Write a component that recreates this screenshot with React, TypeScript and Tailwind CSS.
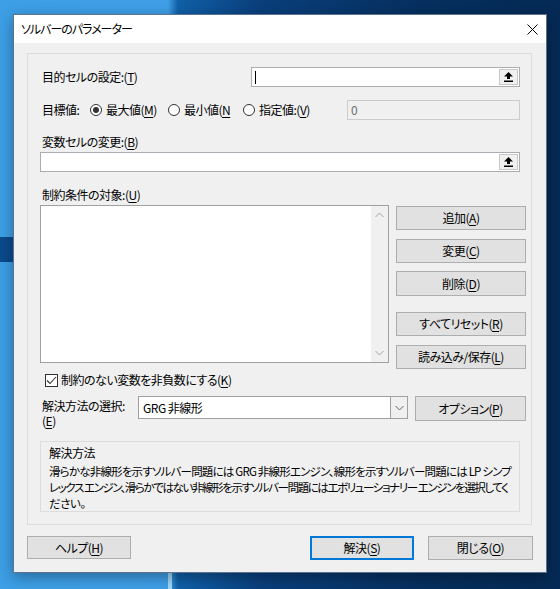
import type { ReactNode } from 'react';

const ui = "font-['Noto_Sans_CJK_JP','Noto_Sans',sans-serif] [font-feature-settings:'palt'] text-[12px] leading-[16px] tracking-[-0.5px] text-black";

function Key({ k }: { k: string }) {
  return <span className="underline underline-offset-[2px]">{k}</span>;
}

function WinButton({
  children,
  className = '',
  primary = false,
}: {
  children: ReactNode;
  className?: string;
  primary?: boolean;
}) {
  return (
    <div
      className={`flex shrink-0 items-center justify-center bg-[#e1e1e1] ${
        primary ? 'border-2 border-[#0078d7]' : 'border border-[#adadad]'
      } ${className}`}
    >
      {children}
    </div>
  );
}

function RefEdit({ className = '' }: { className?: string }) {
  return (
    <div className={`flex h-[20px] border border-[#abadb3] bg-white ${className}`}>
      <div className="flex-1" />
      <div className="w-[19px] m-[1px] bg-[#f0f0f0] border border-[#c8c8c8] flex items-center justify-center">
        <svg width="9" height="10" viewBox="0 0 9 10">
          <path d="M4.5 0 L9 4.5 L6 4.5 L6 7 L3 7 L3 4.5 L0 4.5 Z" fill="#000" />
          <rect x="0" y="8.5" width="9" height="1.5" fill="#000" />
        </svg>
      </div>
    </div>
  );
}

function Radio({ checked = false }: { checked?: boolean }) {
  return (
    <span className="w-[12px] h-[12px] rounded-full border border-[#333] bg-white flex items-center justify-center shrink-0">
      {checked && <span className="w-[6px] h-[6px] rounded-full bg-[#333]" />}
    </span>
  );
}

function Chevron({ down = false, color = '#a3a3a3' }: { down?: boolean; color?: string }) {
  return (
    <svg width="9" height="6" viewBox="0 0 9 6">
      <path
        d={down ? 'M0.5 1 L4.5 5 L8.5 1' : 'M0.5 5 L4.5 1 L8.5 5'}
        fill="none"
        stroke={color}
        strokeWidth="1"
      />
    </svg>
  );
}

export default function App() {
  return (
    <div className="relative w-[560px] h-[589px] overflow-hidden pt-[14px] pl-[13px] bg-[linear-gradient(90deg,#3d9fe6_0px,#3f9fe7_168px,#1060a8_178px,#0a3f7c_260px,#06305f_420px,#052a55_560px)]">
      {/* wallpaper streaks */}
      <div className="absolute left-0 top-[237px] w-[20px] h-[25px] bg-[#0b4a8c]" />
      <div className="absolute left-[168px] top-[570px] w-[4px] h-[19px] bg-[#9fd4f7]" />

      <div className={`relative w-[534px] h-[559px] flex flex-col border border-[#5b7390] bg-[#f0f0f0] shadow-[0_4px_14px_rgba(0,0,0,0.35)] ${ui}`}>
        {/* title bar */}
        <div className="h-[28px] bg-white flex items-center pl-[7px]">
          <span className="tracking-[-1px]">ソルバーのパラメーター</span>
          <div className="ml-auto mr-[8px] flex items-center">
            <svg width="11" height="11" viewBox="0 0 11 11">
              <path d="M0.5 0.5 L10.5 10.5 M10.5 0.5 L0.5 10.5" stroke="#000" strokeWidth="1" />
            </svg>
          </div>
        </div>

        <div className="flex-1 flex flex-col">
          {/* main group */}
          <div className="mt-[10px] ml-[13px] w-[505px] h-[472px] border border-[#dcdcdc] flex flex-col pl-[12px] pr-[11px]">
            <div className="mt-[13px] h-[20px] flex items-center">
              <span className="pl-[2px]">
                目的セルの設定:(<Key k="T" />)
              </span>
              <div className="ml-auto relative w-[269px]">
                <RefEdit />
                <span className="absolute left-[4px] top-[4px] w-[1px] h-[13px] bg-black" />
              </div>
            </div>

            <div className="mt-[13px] h-[20px] flex items-center">
              <span className="pl-[2px] w-[50px]">目標値:</span>
              <span className="w-[78px] flex items-center gap-[4px]">
                <Radio checked />
                <span>
                  最大値(<Key k="M" />)
                </span>
              </span>
              <span className="w-[75px] flex items-center gap-[4px]">
                <Radio />
                <span>
                  最小値(<Key k="N" />
                </span>
              </span>
              <span className="flex items-center gap-[4px]">
                <Radio />
                <span>
                  指定値:(<Key k="V" />)
                </span>
              </span>
              <div className="ml-auto w-[173px] h-[20px] border border-[#cccccc] bg-[#f0f0f0] pl-[3px] flex items-center text-[#6d6d6d]">
                0
              </div>
            </div>

            <div className="mt-[14px] h-[16px] pl-[2px]">
              変数セルの変更:(<Key k="B" />)
            </div>
            <RefEdit className="mt-[2px] w-[480px]" />

            <div className="mt-[15px] h-[16px] pl-[2px]">
              制約条件の対象:(<Key k="U" />)
            </div>
            <div className="mt-[2px] flex items-start">
              <div className="w-[349px] h-[158px] shrink-0 border border-[#a0a0a0] bg-white flex justify-end">
                <div className="w-[17px] h-full bg-[#f0f0f0] flex flex-col items-center justify-between py-[6px]">
                  <Chevron />
                  <Chevron down />
                </div>
              </div>
              <div className="ml-[7px] w-[130px] shrink-0 flex flex-col">
                <WinButton className="mt-[1px] h-[24px]">
                  追加(<Key k="A" />)
                </WinButton>
                <WinButton className="mt-[9px] h-[24px]">
                  変更(<Key k="C" />)
                </WinButton>
                <WinButton className="mt-[8px] h-[25px]">
                  削除(<Key k="D" />)
                </WinButton>
                <WinButton className="mt-[16px] h-[24px]">
                  すべてリセット(<Key k="R" />)
                </WinButton>
                <WinButton className="mt-[9px] h-[24px]">
                  読み込み/保存(<Key k="L" />)
                </WinButton>
              </div>
            </div>

            <div className="mt-[3px] h-[16px] flex items-center pl-[5px] gap-[3px]">
              <span className="w-[13px] h-[13px] border border-[#333] bg-white flex items-center justify-center">
                <svg width="11" height="9" viewBox="0 0 11 9">
                  <path d="M1 4.5 L4 7.5 L10 1" fill="none" stroke="#333" strokeWidth="1.1" />
                </svg>
              </span>
              <span>
                制約のない変数を非負数にする(<Key k="K" />)
              </span>
            </div>

            <div className="mt-[8px] h-[25px] flex items-start">
              <div className="w-[98px] shrink-0 pl-[2px] pt-[2px] leading-[15px]">
                <div>解決方法の選択:</div>
                <div>
                  (<Key k="E" />)
                </div>
              </div>
              <div className="w-[270px] h-[23px] shrink-0 border border-[#a0a0a0] bg-white flex">
                <span className="flex-1 pl-[4px] flex items-center">GRG 非線形</span>
                <span className="w-[17px] border-l border-[#a0a0a0] bg-[#f0f0f0] flex items-center justify-center">
                  <Chevron down color="#606060" />
                </span>
              </div>
              <WinButton className="ml-[7px] w-[111px] h-[25px]">
                オプション(<Key k="P" />)
              </WinButton>
            </div>

            <div className="mt-[20px] w-[480px] h-[71px] border border-[#dcdcdc] pl-[8px] pt-[3px]">
              <div className="h-[16px]">解決方法</div>
              <div className="mt-[2px] whitespace-nowrap text-[11.5px]">
                <div className="tracking-[-0.8px]">
                  滑らかな非線形を示すソルバー問題には GRG 非線形エンジン、線形を示すソルバー問題には LP シンプ
                </div>
                <div className="tracking-[-1.4px]">
                  レックス エンジン、滑らかではない非線形を示すソルバー問題にはエボリューショナリー エンジンを選択してく
                </div>
                <div>ださい。</div>
              </div>
            </div>
          </div>

          {/* footer buttons */}
          <div className="mt-[11px] flex px-[13px]">
            <WinButton className="w-[104px] h-[23px]">
              ヘルプ(<Key k="H" />)
            </WinButton>
            <WinButton primary className="ml-auto w-[104px] h-[24px]">
              解決(<Key k="S" />)
            </WinButton>
            <WinButton className="ml-[14px] w-[105px] h-[24px]">
              閉じる(<Key k="O" />)
            </WinButton>
          </div>
        </div>
      </div>
    </div>
  );
}
